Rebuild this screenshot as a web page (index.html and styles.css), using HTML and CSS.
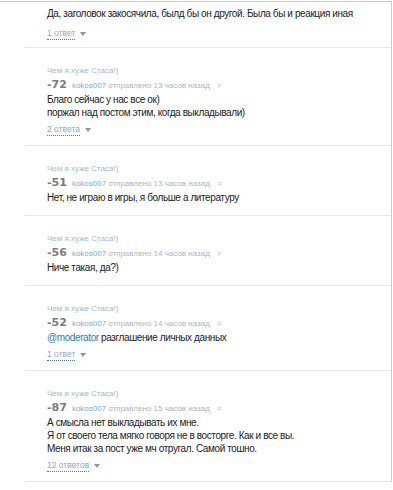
FILE: index.html
```html
<!DOCTYPE html>
<html lang="ru">
<head>
<meta charset="utf-8">
<link rel="stylesheet" href="styles.css">
</head>
<body>
<div class="thread">
  <div class="comment first">
    <div class="body">Да, заголовок закосячила, былд бы он другой. Была бы и реакция иная</div>
    <div class="replies"><span class="link">1 ответ</span><span class="arrow"></span></div>
  </div>

  <div class="comment">
    <div class="title">Чем я хуже Стаса!)</div>
    <div class="meta"><span class="vote">-72</span><span class="user">kokos007</span><span class="time">отправлено 13 часов назад</span><span class="hash">#</span></div>
    <div class="body">Благо сейчас у нас все ок)<br>поржал над постом этим, когда выкладывали)</div>
    <div class="replies"><span class="link">2 ответа</span><span class="arrow"></span></div>
  </div>

  <div class="comment noreplies">
    <div class="title">Чем я хуже Стаса!)</div>
    <div class="meta"><span class="vote">-51</span><span class="user">kokos007</span><span class="time">отправлено 13 часов назад</span><span class="hash">#</span></div>
    <div class="body">Нет, не играю в игры, я больше а литературу</div>
  </div>

  <div class="comment noreplies">
    <div class="title">Чем я хуже Стаса!)</div>
    <div class="meta"><span class="vote">-56</span><span class="user">kokos007</span><span class="time">отправлено 14 часов назад</span><span class="hash">#</span></div>
    <div class="body">Ниче такая, да?)</div>
  </div>

  <div class="comment">
    <div class="title">Чем я хуже Стаса!)</div>
    <div class="meta"><span class="vote">-52</span><span class="user">kokos007</span><span class="time">отправлено 14 часов назад</span><span class="hash">#</span></div>
    <div class="body"><span class="mention">@moderator</span> разглашение личных данных</div>
    <div class="replies"><span class="link">1 ответ</span><span class="arrow"></span></div>
  </div>

  <div class="comment">
    <div class="title">Чем я хуже Стаса!)</div>
    <div class="meta"><span class="vote">-87</span><span class="user">kokos007</span><span class="time">отправлено 15 часов назад</span><span class="hash">#</span></div>
    <div class="body">А смысла нет выкладывать их мне.<br>Я от своего тела мягко говоря не в восторге. Как и все вы.<br>Меня итак за пост уже мч отругал. Самой тошно.</div>
    <div class="replies"><span class="link">12 ответов</span><span class="arrow"></span></div>
  </div>
</div>
</body>
</html>
```

FILE: styles.css
```css
html, body {
  margin: 0;
  padding: 0;
  background: #ffffff;
}

body {
  font-family: "Liberation Sans", sans-serif;
  color: #1a1a1a;
}

.thread {
  border-top: 1px solid #c3d2e2;
  border-right: 1px solid #c3d2e2;
  margin-top: 1px;
  width: 391px;
}

.comment {
  margin-left: 25px;
  padding: 16px 0 9px 22px;
  border-bottom: 1px solid #e6e6e6;
}

.comment.first {
  padding-top: 5px;
  padding-bottom: 7px;
}

.comment.first .replies {
  margin-top: 8px;
}

.comment.noreplies {
  padding-bottom: 11px;
}

.title {
  font-size: 8px;
  line-height: 13px;
  color: #a6b8cc;
}

.meta {
  display: flex;
  align-items: baseline;
  gap: 5px;
  font-size: 8px;
  line-height: 15px;
}

.vote {
  font-family: "DejaVu Sans", sans-serif;
  font-size: 11px;
  font-weight: bold;
  color: #7d7d7d;
}

.user {
  color: #79aedb;
}

.time {
  color: #b3b3b3;
  margin-left: -3px;
}

.hash {
  color: #c9d4e0;
  font-style: italic;
  margin-left: 2px;
}

.body {
  font-size: 10px;
  line-height: 13px;
  letter-spacing: -0.4px;
  color: #1c1c1c;
}

.mention {
  color: #3a78b0;
}

.replies {
  display: flex;
  align-items: center;
  gap: 5px;
  margin-top: 5px;
  font-size: 8.5px;
  line-height: 14px;
}

.replies .link {
  color: #93a7bd;
  border-bottom: 1px dotted #5d7fa6;
  line-height: 11px;
}

.arrow {
  width: 0;
  height: 0;
  border-left: 3px solid transparent;
  border-right: 3px solid transparent;
  border-top: 4px solid #8496aa;
}
```
